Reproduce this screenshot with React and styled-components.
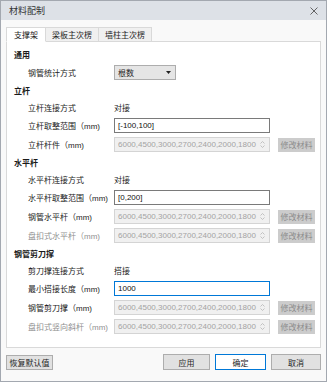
import React, { useState } from 'react';
import styled, { createGlobalStyle } from 'styled-components';

const GlobalStyle = createGlobalStyle`
    html, body {
        margin: 0;
        padding: 0;
        background: #ffffff;
    }
    body {
        font-family: "Liberation Sans", "Noto Sans CJK SC", sans-serif;
        font-size: 8px;
        color: #1e1e1e;
    }
`;

const Window = styled.div`
    width: 327px;
    height: 382px;
    box-sizing: border-box;
    border: 1px solid #a3a8b0;
    background: #f9f9f9;
    display: flex;
    flex-direction: column;
`;

const TitleBar = styled.div`
    height: 19px;
    background: #dde1e7;
    display: flex;
    align-items: center;
    justify-content: space-between;
    padding: 0 8px 0 8px;
    font-size: 9px;
    color: #333;
`;

const Close = styled.span`
    width: 8px;
    height: 8px;
    display: flex;
    margin-top: 1px;
`;

const Body = styled.div`
    flex: 1;
    display: flex;
    flex-direction: column;
    padding: 7px 5px 0 5px;
`;

const Tabs = styled.div`
    display: flex;
    height: 15px;
    position: relative;
    z-index: 1;
`;

const Tab = styled.div`
    height: 15px;
    box-sizing: border-box;
    padding: 0 ${({ $w }) => $w}px;
    display: flex;
    align-items: center;
    border: 1px solid #d9d9d9;
    border-left: ${({ $first }) => ($first ? '1px solid #d9d9d9' : 'none')};
    border-bottom: ${({ $active }) => ($active ? '1px solid #ffffff' : '1px solid #d9d9d9')};
    background: ${({ $active }) => ($active ? '#ffffff' : '#f0f0f0')};
    cursor: pointer;
`;

const Panel = styled.div`
    margin-top: -1px;
    height: 307px;
    box-sizing: border-box;
    border: 1px solid #d9d9d9;
    background: #ffffff;
    padding: 4px 0 0 7px;
    display: flex;
    flex-direction: column;
`;

const Header = styled.div`
    height: 17px;
    display: flex;
    align-items: center;
    font-weight: bold;
    color: #1a1a1a;
`;

const Row = styled.div`
    height: ${({ $tall }) => ($tall ? 19 : 17)}px;
    display: flex;
    align-items: center;
`;

const Label = styled.div`
    width: 86px;
    padding-left: 14px;
    color: ${({ $muted }) => ($muted ? '#8f8f8f' : '#222')};
    white-space: nowrap;
`;

const Value = styled.div`
    color: #222;
`;

const Input = styled.div`
    width: 156px;
    height: 15px;
    box-sizing: border-box;
    border: 1px solid ${({ $focus, $disabled }) => ($focus ? '#0078d7' : $disabled ? '#d4d4d4' : '#7a7a7a')};
    background: ${({ $disabled }) => ($disabled ? '#f0f0f0' : '#ffffff')};
    color: ${({ $disabled }) => ($disabled ? '#a3a3a3' : '#111')};
    display: flex;
    align-items: center;
    justify-content: space-between;
    padding: 0 4px 0 3px;
`;

const Spin = styled.span`
    display: flex;
    flex-direction: column;
    gap: 1px;
`;

const SmallButton = styled.div`
    margin-left: 8px;
    width: 37px;
    height: 14px;
    background: #cccccc;
    color: #8c8c8c;
    display: flex;
    align-items: center;
    justify-content: center;
`;

const Select = styled.div`
    width: 62px;
    height: 15px;
    box-sizing: border-box;
    border: 1px solid #adadad;
    background: #e5e5e5;
    display: flex;
    align-items: center;
    justify-content: space-between;
    padding: 0 4px 0 3px;
`;

const Footer = styled.div`
    display: flex;
    align-items: center;
    padding-top: 6px;
`;

const Button = styled.div`
    width: ${({ $w }) => $w}px;
    height: ${({ $h }) => $h || 16}px;
    box-sizing: border-box;
    border: 1px solid ${({ $primary }) => ($primary ? '#0078d7' : '#adadad')};
    background: ${({ $primary }) => ($primary ? '#ffffff' : '#e1e1e1')};
    display: flex;
    align-items: center;
    justify-content: center;
    margin-left: ${({ $gap }) => $gap || 0}px;
    cursor: pointer;
`;

const Spacer = styled.div`
    flex: 1;
`;

const CloseIcon = () => (
    <svg width="8" height="8" viewBox="0 0 8 8">
        <path d="M0.5 0.5L7.5 7.5M7.5 0.5L0.5 7.5" stroke="#555" strokeWidth="0.9" />
    </svg>
);

const SpinIcon = () => (
    <Spin>
        <svg width="5" height="3" viewBox="0 0 5 3">
            <path d="M0.5 2.5L2.5 0.5L4.5 2.5" stroke="#b5b5b5" strokeWidth="0.8" fill="none" />
        </svg>
        <svg width="5" height="3" viewBox="0 0 5 3">
            <path d="M0.5 0.5L2.5 2.5L4.5 0.5" stroke="#b5b5b5" strokeWidth="0.8" fill="none" />
        </svg>
    </Spin>
);

const lengths = '6000,4500,3000,2700,2400,2000,1800';

const MaterialRow = ({ label, muted }) => (
    <Row $tall>
        <Label $muted={muted}>{label}</Label>
        <Input $disabled>
            <span>{lengths}</span>
            <SpinIcon />
        </Input>
        <SmallButton>修改材料</SmallButton>
    </Row>
);

const TextRow = ({ label, value, focus }) => (
    <Row $tall>
        <Label>{label}</Label>
        <Input $focus={focus}>
            <span>{value}</span>
        </Input>
    </Row>
);

const tabs = [
    { name: '支撑架', pad: 7 },
    { name: '梁板主次楞', pad: 6 },
    { name: '墙柱主次楞', pad: 6 },
];

const App = () => {
    const [active, setActive] = useState(0);

    return (
        <>
            <GlobalStyle />
            <Window>
                <TitleBar>
                    <span>材料配制</span>
                    <Close><CloseIcon /></Close>
                </TitleBar>
                <Body>
                    <Tabs>
                        {tabs.map((t, i) => (
                            <Tab
                                key={t.name}
                                $w={t.pad}
                                $first={i === 0}
                                $active={active === i}
                                onClick={() => setActive(i)}
                            >
                                {t.name}
                            </Tab>
                        ))}
                    </Tabs>
                    <Panel>
                        <Header>通用</Header>
                        <Row $tall>
                            <Label>钢管统计方式</Label>
                            <Select>
                                <span>根数</span>
                                <svg width="5" height="3" viewBox="0 0 5 3">
                                    <path d="M0 0H5L2.5 3Z" fill="#222" />
                                </svg>
                            </Select>
                        </Row>

                        <Header>立杆</Header>
                        <Row>
                            <Label>立杆连接方式</Label>
                            <Value>对接</Value>
                        </Row>
                        <TextRow label="立杆取整范围（mm)" value="[-100,100]" />
                        <MaterialRow label="立杆杆件（mm)" />

                        <Header>水平杆</Header>
                        <Row>
                            <Label>水平杆连接方式</Label>
                            <Value>对接</Value>
                        </Row>
                        <TextRow label="水平杆取整范围（mm)" value="[0,200]" />
                        <MaterialRow label="钢管水平杆（mm)" />
                        <MaterialRow label="盘扣式水平杆（mm)" muted />

                        <Header>钢管剪刀撑</Header>
                        <Row>
                            <Label>剪刀撑连接方式</Label>
                            <Value>搭接</Value>
                        </Row>
                        <TextRow label="最小搭接长度（mm)" value="1000" focus />
                        <MaterialRow label="钢管剪刀撑（mm)" />
                        <MaterialRow label="盘扣式竖向斜杆（mm)" muted />
                    </Panel>
                    <Footer>
                        <Button $w={47} $h={15}>恢复默认值</Button>
                        <Spacer />
                        <Button $w={47}>应用</Button>
                        <Button $w={51} $gap={5} $primary>确定</Button>
                        <Button $w={50} $gap={5}>取消</Button>
                    </Footer>
                </Body>
            </Window>
        </>
    );
};

export default App;
